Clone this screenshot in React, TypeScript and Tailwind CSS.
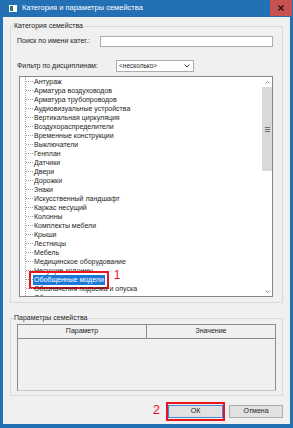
const items = [
  "Антураж",
  "Арматура воздуховодов",
  "Арматура трубопроводов",
  "Аудиовизуальные устройства",
  "Вертикальная циркуляция",
  "Воздухораспределители",
  "Временные конструкции",
  "Выключатели",
  "Генплан",
  "Датчики",
  "Двери",
  "Дорожки",
  "Знаки",
  "Искусственный ландшафт",
  "Каркас несущий",
  "Колонны",
  "Комплекты мебели",
  "Крыши",
  "Лестницы",
  "Мебель",
  "Медицинское оборудование",
  "Несущие колонны",
  "Обобщенные модели",
  "Обозначения подъема и опуска",
  "Оборудование",
];

const SELECTED = "Обобщенные модели";

function TreeRow({ label }: { label: string }) {
  const selected = label === SELECTED;
  return (
    <div className="flex items-center h-[9px] shrink-0 whitespace-nowrap">
      <span className="w-[7px] border-t border-dotted border-[#a0a0a0]" />
      {selected ? (
        <>
          <span className="px-[1px] bg-[#1a78d8] text-white leading-[10px] outline-2 outline-solid outline-[#e8141e] outline-offset-[2px]">
            {label}
          </span>
          <span className="ml-[9px] text-[12px] leading-none text-[#e8141e] relative -top-[5px]">1</span>
        </>
      ) : (
        <span className="px-[1px] leading-[9px]">{label}</span>
      )}
    </div>
  );
}

export default function App() {
  return (
    <div className="w-[293px] h-[428px] bg-[#2470b5] flex flex-col overflow-hidden font-[family-name:'Liberation_Sans',Arial,sans-serif] text-[#1e1e1e]">
      {/* Title bar */}
      <div className="h-[17px] flex items-start shrink-0">
        <div className="ml-[9px] mt-[5px]">
          <svg width="8" height="7" viewBox="0 0 8 7">
            <rect x="0" y="0" width="8" height="7" fill="#ffffff" />
            <rect x="1" y="1" width="3" height="5" fill="#2f7a5a" />
          </svg>
        </div>
        <div className="ml-[5px] h-[16px] leading-[16px] text-white text-[7.5px] whitespace-nowrap">
          Категория и параметры семейства
        </div>
        <div className="ml-auto mr-[1px] w-[22px] h-[16px] bg-[#c75050] flex items-center justify-center">
          <svg width="6" height="6" viewBox="0 0 6 6">
            <path d="M0.5 0.5 L5.5 5.5 M5.5 0.5 L0.5 5.5" stroke="#2a1414" strokeWidth="1.4" />
          </svg>
        </div>
      </div>

      {/* Body */}
      <div className="flex-1 mx-[3px] mb-[4px] bg-[#f0f0f0] flex flex-col pt-[4px] text-[7px]">
        <fieldset className="mx-[7px] border border-[#d9d9d9]">
          <legend className="ml-[2px] px-[1px] leading-[10px]">Категория семейства</legend>
          <div className="pl-[6px] pr-[9px] pb-[5px]">
            <div className="mt-[5px] flex items-center h-[11px]">
              <span className="w-[83px] whitespace-nowrap">Поиск по имени катег.:</span>
              <div className="flex-1 h-[11px] bg-white border border-[#abadb3]" />
            </div>
            <div className="mt-[13px] flex items-center h-[12px]">
              <span className="w-[99px] whitespace-nowrap">Фильтр по дисциплинам:</span>
              <div className="w-[78px] h-[12px] bg-white border border-[#acacac] flex items-center justify-between pl-[2px] pr-[3px]">
                <span className="text-[6.5px] leading-none">&lt;несколько&gt;</span>
                <svg width="6" height="4" viewBox="0 0 6 4">
                  <path d="M0.5 0.5 L3 3 L5.5 0.5" stroke="#444" strokeWidth="1" fill="none" />
                </svg>
              </div>
            </div>
            <div className="mt-[4px] ml-[2px] h-[221px] bg-white border border-[#828790] flex overflow-hidden">
              <div className="flex-1 overflow-hidden pl-[5px]">
                <div className="h-full border-l border-dotted border-[#a0a0a0] flex flex-col">
                  {items.map((it) => (
                    <TreeRow key={it} label={it} />
                  ))}
                </div>
              </div>
              <div className="w-[10px] flex flex-col bg-white">
                <div className="h-[10px] flex items-center justify-center">
                  <svg width="5" height="3" viewBox="0 0 5 3">
                    <path d="M0.5 2.5 L2.5 0.5 L4.5 2.5" stroke="#777" strokeWidth="0.9" fill="none" />
                  </svg>
                </div>
                <div className="h-[84px] bg-[#d9d9d9] flex flex-col items-center justify-center gap-[1px]">
                  <div className="w-[5px] h-px bg-[#6d6d6d]" />
                  <div className="w-[5px] h-px bg-[#6d6d6d]" />
                  <div className="w-[5px] h-px bg-[#6d6d6d]" />
                </div>
                <div className="flex-1" />
                <div className="h-[10px] flex items-center justify-center">
                  <svg width="5" height="3" viewBox="0 0 5 3">
                    <path d="M0.5 0.5 L2.5 2.5 L4.5 0.5" stroke="#777" strokeWidth="0.9" fill="none" />
                  </svg>
                </div>
              </div>
            </div>
          </div>
        </fieldset>

        <fieldset className="mt-[10px] mx-[7px] border border-[#d9d9d9]">
          <legend className="ml-[2px] px-[1px] leading-[10px]">Параметры семейства</legend>
          <div className="px-[6px] pt-[1px] pb-[4px]">
            <div className="h-[67px] border-l border-r border-b border-[#8c8c8c] border-b-[#c4c4c4] flex flex-col">
              <div className="h-[15px] flex border-t border-b border-[#8c8c8c]">
                <div className="w-[129px] border-r border-[#8c8c8c] flex items-center justify-center">Параметр</div>
                <div className="flex-1 flex items-center justify-center">Значение</div>
              </div>
            </div>
          </div>
        </fieldset>

        <div className="mt-auto mb-[3px] flex items-center justify-end pr-[7px]">
          <span className="mr-[6px] text-[13px] leading-none text-[#e8141e] relative -top-[2px]">2</span>
          <div className="border-2 border-[#e8141e] py-[1px]">
            <div className="w-[55px] h-[13px] bg-[#e1e1e1] border border-[#3c8ad8] flex items-center justify-center">ОК</div>
          </div>
          <div className="ml-[4px] w-[54px] h-[13px] bg-[#e1e1e1] border border-[#adadad] flex items-center justify-center">Отмена</div>
        </div>
      </div>
    </div>
  );
}
